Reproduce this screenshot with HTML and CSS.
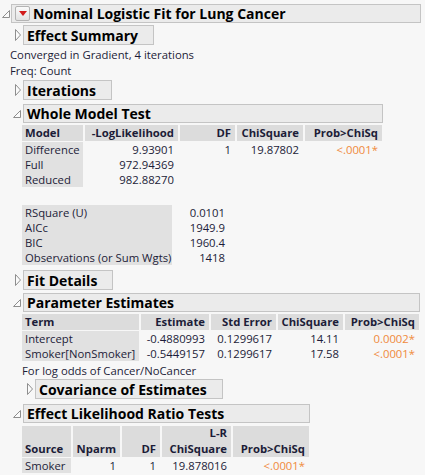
FILE: index.html
```html
<!DOCTYPE html>
<html>
<head>
<meta charset="utf-8">
<link rel="stylesheet" href="styles.css">
</head>
<body>
<div class="page">
  <div class="node open top">
    <div class="head">
      <span class="tri"><svg class="ico-open" width="8" height="8" viewBox="0 0 8 8"><path d="M7.5 0.5 L7.5 7.5 L0.5 7.5 Z"/></svg></span>
      <div class="title"><span class="menu"><svg width="8" height="5" viewBox="0 0 8 5"><path d="M0 0 H8 L4 5 Z"/></svg></span>Nominal Logistic Fit for Lung Cancer</div>
    </div>
    <div class="body">
      <div class="node closed">
        <div class="head">
          <span class="tri"><svg class="ico-closed" width="7" height="12" viewBox="0 0 7 12"><path d="M0.5 0.5 L5.5 6 L0.5 11.5 Z"/></svg></span>
          <div class="title">Effect Summary</div>
        </div>
      </div>
      <div class="notes">
        <div class="note">Converged in Gradient, 4 iterations</div>
        <div class="note">Freq: Count</div>
      </div>
      <div class="node closed n-iter">
        <div class="head">
          <span class="tri"><svg class="ico-closed" width="7" height="12" viewBox="0 0 7 12"><path d="M0.5 0.5 L5.5 6 L0.5 11.5 Z"/></svg></span>
          <div class="title">Iterations</div>
        </div>
      </div>
      <div class="node open n-wmt">
        <div class="head">
          <span class="tri"><svg class="ico-open" width="8" height="8" viewBox="0 0 8 8"><path d="M7.5 0.5 L7.5 7.5 L0.5 7.5 Z"/></svg></span>
          <div class="title">Whole Model Test</div>
        </div>
        <div class="body">
          <div class="grid t-wmt">
            <div class="th lab-h">Model</div>
            <div class="th num">-LogLikelihood</div>
            <div class="th num">DF</div>
            <div class="th num">ChiSquare</div>
            <div class="th num">Prob&gt;ChiSq</div>

            <div class="lab">Difference</div>
            <div class="num">9.93901</div>
            <div class="num">1</div>
            <div class="num">19.87802</div>
            <div class="num sig">&lt;.0001*</div>

            <div class="lab">Full</div>
            <div class="num">972.94369</div>
            <div></div><div></div><div></div>

            <div class="lab">Reduced</div>
            <div class="num">982.88270</div>
            <div></div><div></div><div></div>
          </div>
          <div class="grid t-fit">
            <div class="lab">RSquare (U)</div><div class="num">0.0101</div>
            <div class="lab">AICc</div><div class="num">1949.9</div>
            <div class="lab">BIC</div><div class="num">1960.4</div>
            <div class="lab">Observations (or Sum Wgts)</div><div class="num">1418</div>
          </div>
        </div>
      </div>
      <div class="node closed n-fit">
        <div class="head">
          <span class="tri"><svg class="ico-closed" width="7" height="12" viewBox="0 0 7 12"><path d="M0.5 0.5 L5.5 6 L0.5 11.5 Z"/></svg></span>
          <div class="title">Fit Details</div>
        </div>
      </div>
      <div class="node open n-pe">
        <div class="head">
          <span class="tri"><svg class="ico-open" width="8" height="8" viewBox="0 0 8 8"><path d="M7.5 0.5 L7.5 7.5 L0.5 7.5 Z"/></svg></span>
          <div class="title">Parameter Estimates</div>
        </div>
        <div class="body">
          <div class="grid t-pe">
            <div class="th lab-h">Term</div>
            <div class="th num">Estimate</div>
            <div class="th num">Std Error</div>
            <div class="th num">ChiSquare</div>
            <div class="th num">Prob&gt;ChiSq</div>

            <div class="lab">Intercept</div>
            <div class="num">-0.4880993</div>
            <div class="num">0.1299617</div>
            <div class="num">14.11</div>
            <div class="num sig">0.0002*</div>

            <div class="lab">Smoker[NonSmoker]</div>
            <div class="num">-0.5449157</div>
            <div class="num">0.1299617</div>
            <div class="num">17.58</div>
            <div class="num sig">&lt;.0001*</div>
          </div>
          <div class="caption">For log odds of Cancer/NoCancer</div>
          <div class="node closed n-cov">
            <div class="head">
              <span class="tri"><svg class="ico-closed" width="7" height="12" viewBox="0 0 7 12"><path d="M0.5 0.5 L5.5 6 L0.5 11.5 Z"/></svg></span>
              <div class="title">Covariance of Estimates</div>
            </div>
          </div>
        </div>
      </div>
      <div class="node open n-lr">
        <div class="head">
          <span class="tri"><svg class="ico-open" width="8" height="8" viewBox="0 0 8 8"><path d="M7.5 0.5 L7.5 7.5 L0.5 7.5 Z"/></svg></span>
          <div class="title">Effect Likelihood Ratio Tests</div>
        </div>
        <div class="body">
          <div class="grid t-lr">
            <div class="th lab-h two">Source</div>
            <div class="th num two">Nparm</div>
            <div class="th num two">DF</div>
            <div class="th num two">L-R<br>ChiSquare</div>
            <div class="th num two">Prob&gt;ChiSq</div>

            <div class="lab">Smoker</div>
            <div class="num">1</div>
            <div class="num">1</div>
            <div class="num">19.878016</div>
            <div class="num sig">&lt;.0001*</div>
          </div>
        </div>
      </div>
    </div>
  </div>
</div>
</body>
</html>
```

FILE: styles.css
```css
* { box-sizing: border-box; }
html, body {
  margin: 0;
  background: #f7f7f7;
}
body {
  font-family: "Open Sans", "Noto Sans", sans-serif;
  font-size: 11.3px;
  color: #1c1c38;
}
.page {
  width: 425px;
  height: 475px;
  overflow: hidden;
  padding-top: 4px;
}

/* outline nodes */
.node {
  display: flex;
  flex-direction: column;
  width: max-content;
}
.head {
  display: flex;
  align-items: center;
}
.tri {
  width: 13px;
  flex: none;
  display: flex;
  align-items: center;
}
.tri svg path {
  fill: #fbfbfb;
  stroke: #8e8e8e;
  stroke-width: 1;
}
.ico-open { margin-left: 3px; }
.ico-closed { margin-left: 5px; }
.top > .head > .tri { width: 11px; }
.top > .head > .tri .ico-open { margin-left: 2px; }

.title {
  flex: 1;
  height: 19px;
  border: 1px solid #c4c4c4;
  background: #ebebeb;
  font-weight: 700;
  font-size: 14px;
  color: #000;
  line-height: 17px;
  padding: 0 15px 0 3px;
  white-space: nowrap;
  display: flex;
  align-items: center;
}
.node.closed > .head > .title { height: 20px; }
.node.open > .head > .title { padding-right: 0; }

.body {
  padding-left: 12px;
  padding-right: 1px;
}
.top > .body { padding-left: 10px; }

.menu {
  width: 15px;
  height: 15px;
  margin-right: 3px;
  border: 1px solid #b3b3b3;
  border-radius: 2px;
  background: linear-gradient(#fafafa, #e2e2e2);
  display: flex;
  align-items: center;
  justify-content: center;
}
.menu svg path { fill: #d11a1a; }

/* spacing between outline pieces */
.top > .body > .node.closed:first-child { margin-top: 2px; }
.notes { margin-top: 2px; }
.note { line-height: 16px; }
.n-iter { margin-top: 1px; }
.n-wmt { margin-top: 4px; }
.n-fit { margin-top: 5px; }
.n-pe { margin-top: 3px; }
.n-lr { margin-top: 5px; }

/* tables */
.grid {
  display: grid;
  column-gap: 2px;
  margin-top: 2px;
  line-height: 15px;
  white-space: nowrap;
}
.t-wmt { grid-template-columns: 61px 93px 55px 66px 77px; }
.t-fit { grid-template-columns: 150px 53px; margin-top: 18px; }
.t-pe  { grid-template-columns: 117px 68px 65px 65px 74px; }
.t-lr  { grid-template-columns: 49px 47px 38px 69px 76px; margin-top: 3px; }

.th {
  background: #dcdcdc;
  font-weight: 700;
  height: 16px;
  line-height: 16px;
  margin-bottom: 1px;
}
.th.two {
  height: 31px;
  display: flex;
  flex-direction: column;
  justify-content: flex-end;
  align-items: flex-end;
  text-align: right;
}
.th.lab-h.two { align-items: flex-start; text-align: left; }
.lab, .lab-h { padding-left: 3px; }
.lab { background: #e1e1e1; }
.num { text-align: right; padding-right: 4px; }
.t-fit .num { padding-right: 2px; }
.sig { color: #f08a3c; }

.caption { line-height: 16px; margin-top: 2px; }
.n-cov { margin-top: 0; }
```
